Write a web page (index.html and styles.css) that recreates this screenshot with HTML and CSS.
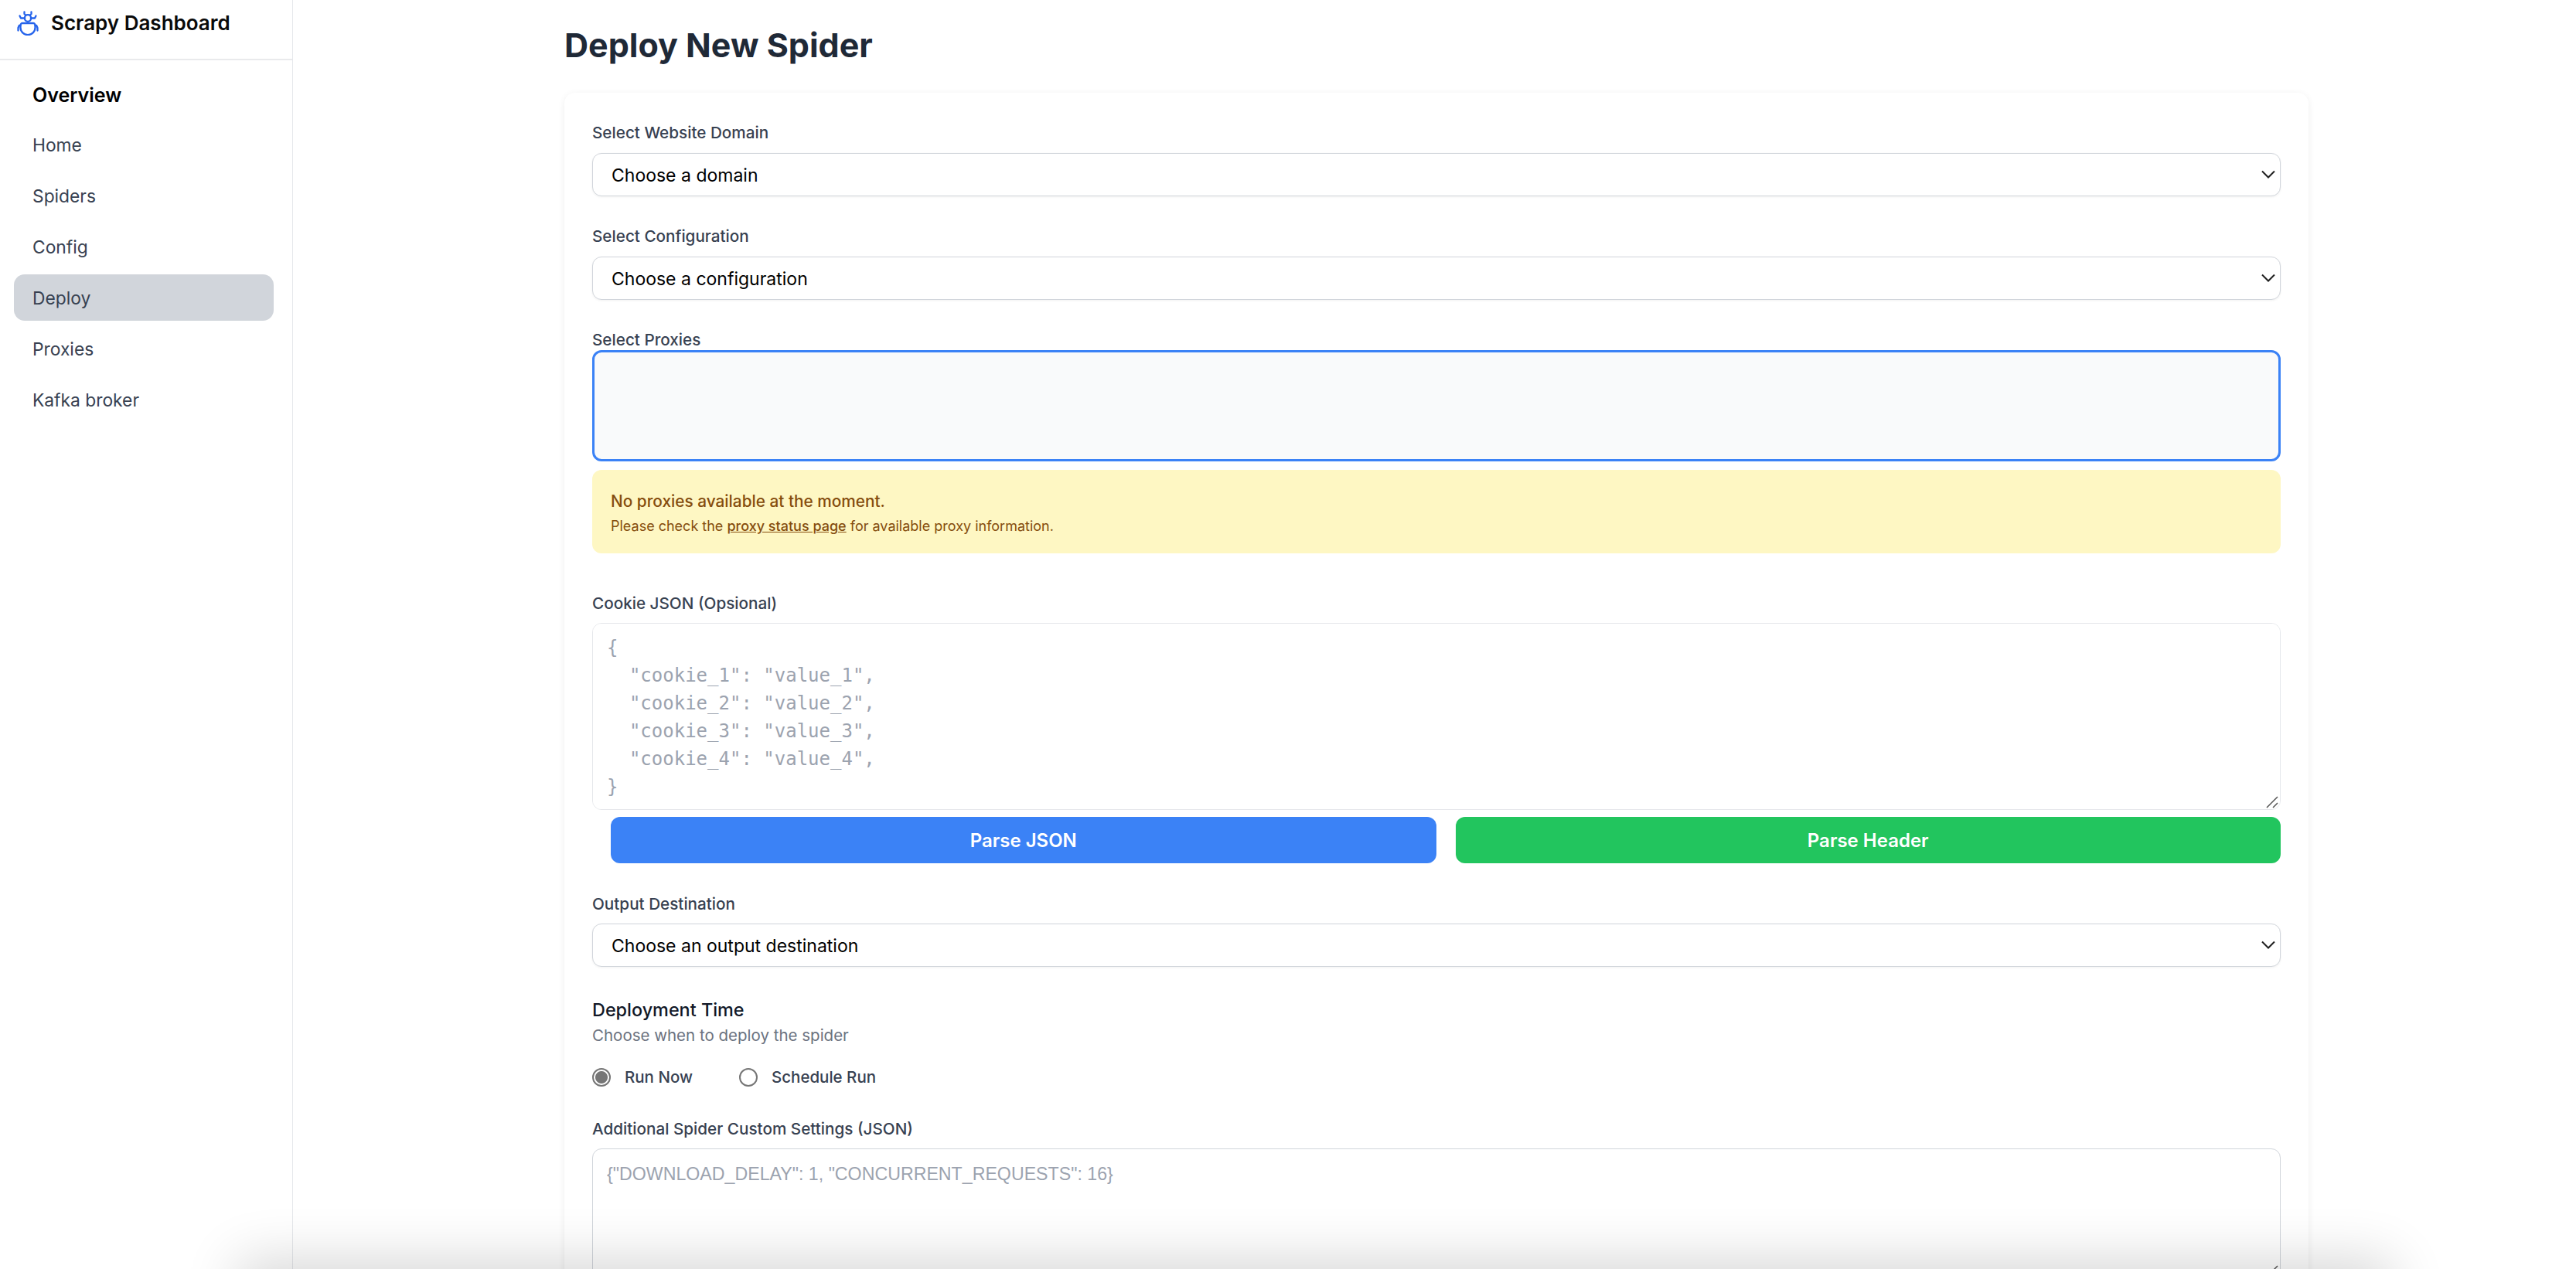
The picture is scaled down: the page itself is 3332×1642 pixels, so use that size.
FILE: index.html
```html
<!DOCTYPE html>
<html lang="en">
<head>
<meta charset="utf-8">
<title>Deploy New Spider</title>
<link rel="stylesheet" href="styles.css">
</head>
<body>
<aside class="sidebar">
  <div class="brand">
    <svg class="brand-icon" viewBox="0 0 28 32" fill="none" stroke="#2563eb" stroke-width="2.300" stroke-linecap="round" stroke-linejoin="round">
      <path d="M9.500 1.500v2.500l1.800 1.800M18.500 1.500v2.500l-1.800 1.800"/>
      <path d="M10 8.800a4 3.600 0 0 1 8 0v1.400a4 3.600 0 0 1-8 0z"/>
      <path d="M10 9.500H5L3.500 6.500M18 9.500h5l1.500-3"/>
      <path d="M7 16h14a2.500 2.500 0 0 1 2.500 2.500v3.300a9.500 9.300 0 0 1-19 0v-3.300A2.500 2.500 0 0 1 7 16z"/>
      <path d="M4.500 19H2.800L1.500 22v3.500M23.500 19h1.700l1.300 3v3.500"/>
    </svg>
    <span class="brand-name">Scrapy Dashboard</span>
  </div>
  <nav class="nav">
    <div class="nav-title">Overview</div>
    <a class="nav-item">Home</a>
    <a class="nav-item">Spiders</a>
    <a class="nav-item">Config</a>
    <a class="nav-item nav-item-active">Deploy</a>
    <a class="nav-item">Proxies</a>
    <a class="nav-item">Kafka broker</a>
  </nav>
</aside>
<main class="main">
  <h1 class="title">Deploy New Spider</h1>
  <form class="card">
    <label class="label">Select Website Domain</label>
    <div class="select-wrap">
      <select class="select"><option>Choose a domain</option></select>
      <svg class="chevron" viewBox="0 0 18 11" fill="none" stroke="#1f1f1f" stroke-width="2"><path d="M1 1.500l8 8 8-8"/></svg>
    </div>

    <label class="label label-next">Select Configuration</label>
    <div class="select-wrap">
      <select class="select"><option>Choose a configuration</option></select>
      <svg class="chevron" viewBox="0 0 18 11" fill="none" stroke="#1f1f1f" stroke-width="2"><path d="M1 1.500l8 8 8-8"/></svg>
    </div>

    <label class="label label-next label-tight">Select Proxies</label>
    <select class="proxy-list" multiple></select>

    <div class="notice">
      <p class="notice-title">No proxies available at the moment.</p>
      <p class="notice-text">Please check the <a class="notice-link">proxy status page</a> for available proxy information.</p>
    </div>

    <label class="label label-cookie">Cookie JSON (Opsional)</label>
    <div class="textarea-wrap">
      <textarea class="textarea textarea-code" placeholder='{
  "cookie_1": "value_1",
  "cookie_2": "value_2",
  "cookie_3": "value_3",
  "cookie_4": "value_4",
}'></textarea>
      <svg class="grip" viewBox="0 0 16 16" fill="none" stroke="#555" stroke-width="1.500"><path d="M1 15L15 1M9 15l6-6"/></svg>
    </div>

    <div class="button-row">
      <button type="button" class="button button-blue">Parse JSON</button>
      <button type="button" class="button button-green">Parse Header</button>
    </div>

    <label class="label label-output">Output Destination</label>
    <div class="select-wrap">
      <select class="select select-output"><option>Choose an output destination</option></select>
      <svg class="chevron" viewBox="0 0 18 11" fill="none" stroke="#1f1f1f" stroke-width="2"><path d="M1 1.500l8 8 8-8"/></svg>
    </div>

    <div class="section-title">Deployment Time</div>
    <div class="section-sub">Choose when to deploy the spider</div>
    <div class="radio-row">
      <label class="radio-option"><input class="radio" type="radio" name="when" checked><span>Run Now</span></label>
      <label class="radio-option"><input class="radio" type="radio" name="when"><span>Schedule Run</span></label>
    </div>

    <label class="label label-settings">Additional Spider Custom Settings (JSON)</label>
    <div class="textarea-wrap">
      <textarea class="textarea textarea-settings" placeholder='{"DOWNLOAD_DELAY": 1, "CONCURRENT_REQUESTS": 16}'></textarea>
      <svg class="grip" viewBox="0 0 16 16" fill="none" stroke="#555" stroke-width="1.500"><path d="M1 15L15 1M9 15l6-6"/></svg>
    </div>
  </form>
</main>
<div class="bottom-shade"></div>
</body>
</html>
```
FILE: styles.css
```css
* { box-sizing: border-box; }
html, body { height: 100%; }
body {
  margin: 0;
  display: flex;
  height: 1642px;
  overflow: hidden;
  background: #fff;
  font-family: Inter, "Noto Sans", sans-serif;
  color: #111827;
}
.sidebar {
  flex: 0 0 379px;
  border-right: 1px solid #e5e7eb;
  background: #fff;
}
.brand {
  height: 78px;
  display: flex;
  align-items: flex-start;
  gap: 16px;
  padding: 14px 0 0 22px;
  border-bottom: 2px solid #e9eaec;
}
.brand-icon { width: 28px; height: 32px; flex: none; }
.brand-name {
  font-size: 26px;
  line-height: 32px;
  font-weight: 600;
  color: #0a0a0a;
  white-space: nowrap;
}
.nav {
  display: flex;
  flex-direction: column;
  gap: 6px;
  padding: 28px 24px 0 18px;
}
.nav-title {
  font-size: 25px;
  line-height: 34px;
  font-weight: 600;
  color: #000;
  padding-left: 24px;
  margin-bottom: 11px;
}
.nav-item {
  height: 60px;
  display: flex;
  align-items: center;
  padding-left: 24px;
  border-radius: 14px;
  font-size: 22.800px;
  color: #374151;
}
.nav-item-active { background: #d1d5db; }
.main {
  flex: 1;
  min-width: 0;
  padding: 31px 346px 0 351px;
}
.title {
  margin: 0 0 35px;
  font-size: 43px;
  line-height: 54px;
  font-weight: 700;
  color: #1f2937;
  white-space: nowrap;
}
.card {
  display: flex;
  flex-direction: column;
  padding: 38px 36px 0;
  background: #fff;
  border-radius: 14px;
  box-shadow: 0 2px 10px rgba(0, 0, 0, 0.07);
  height: 1600px;
}
.label {
  display: block;
  font-size: 20.700px;
  line-height: 28px;
  font-weight: 500;
  color: #374151;
  margin-bottom: 12px;
}
.label-next { margin-top: 38px; }
.label-tight { margin-bottom: -1px; }
.label-cookie { margin-top: 51px; margin-bottom: 11px; }
.label-output { margin-top: 39px; margin-bottom: 11px; }
.label-settings { margin-top: 39px; margin-bottom: 11px; }
.select-wrap { position: relative; }
.select {
  display: block;
  width: 100%;
  height: 56px;
  appearance: none;
  padding: 1px 48px 0 24px;
  border: 1px solid #d1d5db;
  border-radius: 12px;
  background: #fff;
  box-shadow: 0 1px 3px rgba(0, 0, 0, 0.06);
  font-family: inherit;
  font-size: 23px;
  color: #000;
}
.chevron {
  position: absolute;
  right: 7px;
  top: 22px;
  width: 18px;
  height: 11px;
  pointer-events: none;
}
.proxy-list {
  display: block;
  width: 100%;
  height: 144px;
  padding: 0;
  border: 3px solid #3b82f6;
  border-radius: 12px;
  background: #f9fafb;
  outline: none;
}
.notice {
  margin-top: 11px;
  height: 108px;
  padding: 26px 24px 0;
  border-radius: 12px;
  background: #fef7c3;
  color: #854d0e;
}
.notice-title {
  margin: 0;
  font-size: 20.800px;
  line-height: 30px;
  font-weight: 500;
}
.notice-text {
  margin: 3px 0 0;
  font-size: 18px;
  line-height: 28px;
}
.notice-link { text-decoration: underline; font-weight: 500; }
.textarea-wrap { position: relative; }
.textarea {
  display: block;
  width: 100%;
  border: 1px solid #e5e7eb;
  border-radius: 12px;
  background: #fff;
  color: #111827;
  outline: none;
  resize: none;
}
.textarea::placeholder { color: #9ca3af; opacity: 1; }
.textarea-code {
  height: 242px;
  padding: 13px 18px;
  font-family: "DejaVu Sans Mono", monospace;
  font-size: 24px;
  line-height: 36px;
}
.textarea-settings {
  height: 169px;
  padding: 16px 18px;
  border-color: #d1d5db;
  font-family: "Liberation Sans", Arial, sans-serif;
  font-size: 23.200px;
  line-height: 32px;
}
.grip {
  position: absolute;
  right: 3px;
  bottom: 2px;
  width: 16px;
  height: 16px;
  pointer-events: none;
}
.button-row {
  display: flex;
  gap: 25px;
  margin: 9px 0 0 24px;
}
.button {
  flex: 1;
  height: 60px;
  border: 0;
  border-radius: 12px;
  color: #fff;
  font-family: inherit;
  font-size: 24px;
  font-weight: 600;
}
.button-blue { background: #3b82f6; }
.button-green { background: #22c55e; }
.section-title {
  margin-top: 38px;
  font-size: 23.400px;
  line-height: 36px;
  font-weight: 500;
  color: #111827;
}
.section-sub {
  font-size: 20.500px;
  line-height: 30px;
  color: #6b7280;
}
.radio-row {
  display: flex;
  gap: 60px;
  margin-top: 25px;
}
.radio-option {
  display: flex;
  align-items: center;
  gap: 18px;
  font-size: 20.500px;
  line-height: 28px;
  font-weight: 500;
  color: #374151;
}
.radio {
  appearance: none;
  margin: 0;
  width: 24px;
  height: 24px;
  border: 2px solid #767676;
  border-radius: 50%;
  background: #fff;
}
.radio:checked {
  background: radial-gradient(circle, #767676 0 7.500px, #fff 8.500px);
}
.bottom-shade {
  position: fixed;
  left: 320px;
  right: 250px;
  bottom: -70px;
  height: 70px;
  box-shadow: 0 0 70px 12px rgba(0, 0, 0, 0.16);
  pointer-events: none;
}
```
